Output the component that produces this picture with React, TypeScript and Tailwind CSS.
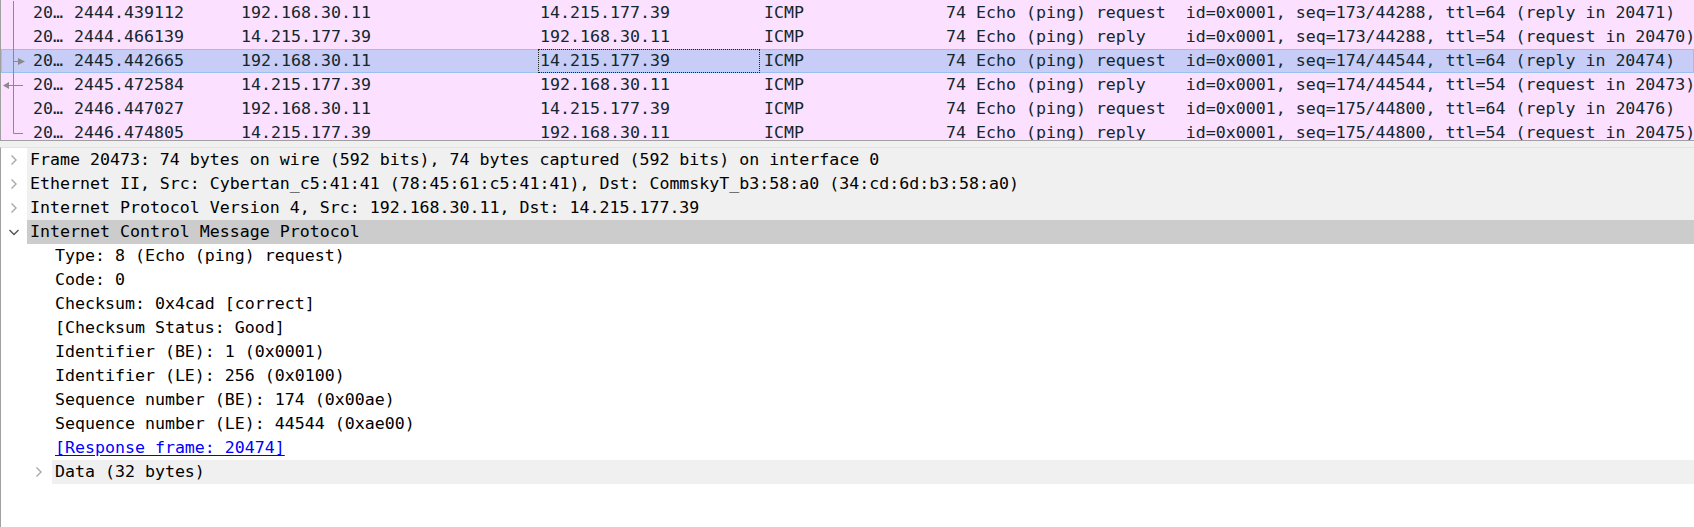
import React from 'react';

type Packet = {
    time: string;
    src: string;
    dst: string;
    info: string;
    mark?: 'right' | 'left' | 'end';
    selected?: boolean;
};

const packets: Packet[] = [
    { time: '2444.439112', src: '192.168.30.11', dst: '14.215.177.39', info: 'Echo (ping) request  id=0x0001, seq=173/44288, ttl=64 (reply in 20471)' },
    { time: '2444.466139', src: '14.215.177.39', dst: '192.168.30.11', info: 'Echo (ping) reply    id=0x0001, seq=173/44288, ttl=54 (request in 20470)' },
    { time: '2445.442665', src: '192.168.30.11', dst: '14.215.177.39', info: 'Echo (ping) request  id=0x0001, seq=174/44544, ttl=64 (reply in 20474)', mark: 'right', selected: true },
    { time: '2445.472584', src: '14.215.177.39', dst: '192.168.30.11', info: 'Echo (ping) reply    id=0x0001, seq=174/44544, ttl=54 (request in 20473)', mark: 'left' },
    { time: '2446.447027', src: '192.168.30.11', dst: '14.215.177.39', info: 'Echo (ping) request  id=0x0001, seq=175/44800, ttl=64 (reply in 20476)' },
    { time: '2446.474805', src: '14.215.177.39', dst: '192.168.30.11', info: 'Echo (ping) reply    id=0x0001, seq=175/44800, ttl=54 (request in 20475)', mark: 'end' },
];

// related-packet indicator in the first column
function Related({ mark }: { mark?: Packet['mark'] }) {
    return (
        <svg width="28" height="24" viewBox="0 0 28 24" className="shrink-0">
            <g stroke="#8a8a8a" strokeWidth="1" fill="none">
                {mark === 'end' ? (
                    <path d="M12.5 0 V12.5 H22" />
                ) : (
                    <path d="M12.5 0 V24" />
                )}
                {mark === 'right' && <path d="M12 12.5 H18" />}
                {mark === 'left' && <path d="M7 12.5 H22" />}
            </g>
            {mark === 'right' && <path d="M17 9 L24 12.5 L17 16 Z" fill="#8a8a8a" />}
            {mark === 'left' && <path d="M8 9 L2 12.5 L8 16 Z" fill="#8a8a8a" />}
        </svg>
    );
}

function Chevron({ open, dark }: { open?: boolean; dark?: boolean }) {
    return (
        <svg width="12" height="12" viewBox="0 0 12 12" className="shrink-0">
            {open ? (
                <path d="M1.5 4 L6 8.5 L10.5 4" stroke={dark ? '#555' : '#999'} strokeWidth="1.4" fill="none" />
            ) : (
                <path d="M3.5 1.5 L8 6 L3.5 10.5" stroke="#a8a8a8" strokeWidth="1.4" fill="none" />
            )}
        </svg>
    );
}

function TreeTop({ label, open, active }: { label: string; open?: boolean; active?: boolean }) {
    return (
        <div className="flex h-6 items-center">
            <div className="flex w-[26px] shrink-0 items-center pl-[7px]">
                <Chevron open={open} dark={active} />
            </div>
            <div className={`flex h-6 flex-1 items-center whitespace-pre pl-[3px] ${active ? 'bg-[#cccccc]' : 'bg-[#f0f0f0]'}`}>
                {label}
            </div>
        </div>
    );
}

function TreeLeaf({ label, link }: { label: string; link?: boolean }) {
    return (
        <div className="flex h-6 items-center whitespace-pre pl-[54px]">
            {link ? <span className="text-[#0000ff] underline underline-offset-2">{label}</span> : label}
        </div>
    );
}

export default function App() {
    return (
        <div className="flex h-[527px] w-[1694px] flex-col overflow-hidden bg-[#f0f0f0] font-['DejaVu_Sans_Mono',monospace] text-[16.6px] leading-6">
            {/* packet list */}
            <div className="h-[141px] shrink-0 overflow-hidden border-b border-l border-[#a0a0a0] bg-[#fce0ff] pt-px text-[#12272e]">
                {packets.map((p, i) => (
                    <div
                        key={i}
                        className={`flex h-6 items-center whitespace-pre ${p.selected ? 'bg-[#c7cdf6] shadow-[inset_0_0_0_1px_#99c1f0]' : ''}`}
                    >
                        <Related mark={p.mark} />
                        <div className="w-[41px] shrink-0 pl-1">20…</div>
                        <div className="w-[167px] shrink-0 pl-1">{p.time}</div>
                        <div className="w-[301px] shrink-0 pl-1">{p.src}</div>
                        <div
                            className={`h-6 w-[222px] shrink-0 pl-[2px] ${p.selected ? 'outline-1 -outline-offset-1 outline-dotted outline-[#222]' : ''}`}
                        >
                            {p.dst}
                        </div>
                        <div className="w-[170px] shrink-0 pl-1">ICMP</div>
                        <div className="w-[36px] shrink-0 text-right">74</div>
                        <div className="flex-1 pl-[10px]">{p.info}</div>
                    </div>
                ))}
            </div>

            {/* splitter */}
            <div className="h-[6px] shrink-0" />

            {/* packet details */}
            <div className="flex-1 border-l border-t border-[#a0a0a0] border-t-[#e3e3e3] bg-white text-black">
                <TreeTop label="Frame 20473: 74 bytes on wire (592 bits), 74 bytes captured (592 bits) on interface 0" />
                <TreeTop label="Ethernet II, Src: Cybertan_c5:41:41 (78:45:61:c5:41:41), Dst: CommskyT_b3:58:a0 (34:cd:6d:b3:58:a0)" />
                <TreeTop label="Internet Protocol Version 4, Src: 192.168.30.11, Dst: 14.215.177.39" />
                <TreeTop label="Internet Control Message Protocol" open active />
                <TreeLeaf label="Type: 8 (Echo (ping) request)" />
                <TreeLeaf label="Code: 0" />
                <TreeLeaf label="Checksum: 0x4cad [correct]" />
                <TreeLeaf label="[Checksum Status: Good]" />
                <TreeLeaf label="Identifier (BE): 1 (0x0001)" />
                <TreeLeaf label="Identifier (LE): 256 (0x0100)" />
                <TreeLeaf label="Sequence number (BE): 174 (0x00ae)" />
                <TreeLeaf label="Sequence number (LE): 44544 (0xae00)" />
                <TreeLeaf label="[Response frame: 20474]" link />
                <div className="flex h-6 items-center">
                    <div className="flex w-[51px] shrink-0 items-center pl-[32px]">
                        <Chevron />
                    </div>
                    <div className="flex h-6 flex-1 items-center bg-[#f0f0f0] pl-[3px]">Data (32 bytes)</div>
                </div>
            </div>
        </div>
    );
}
